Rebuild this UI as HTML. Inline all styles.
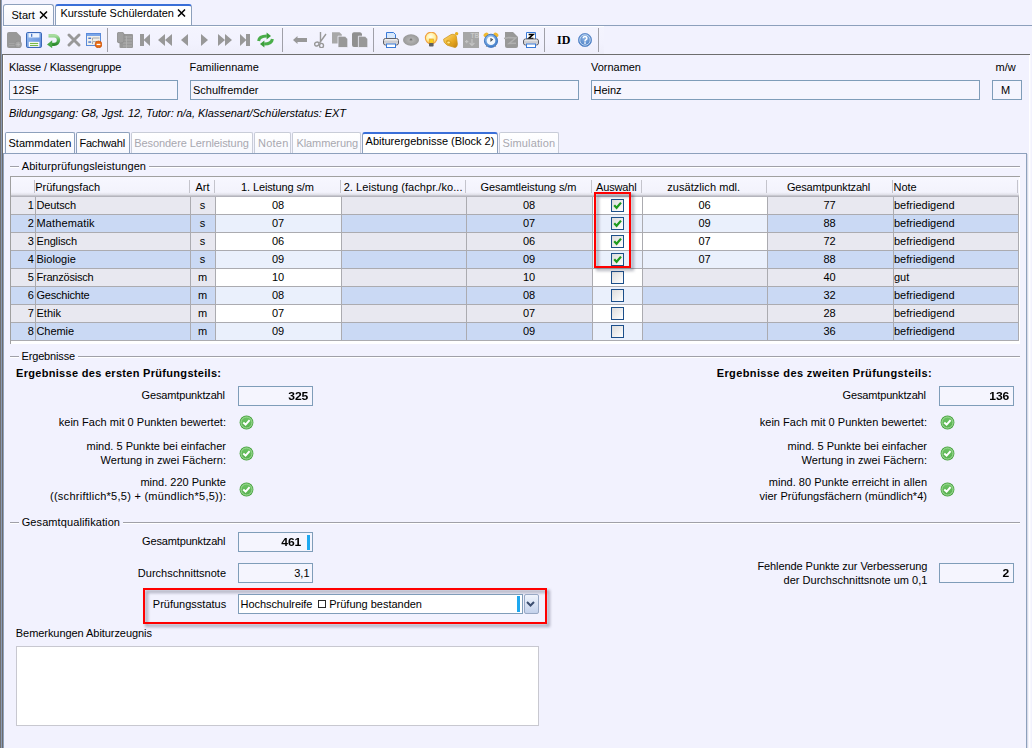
<!DOCTYPE html>
<html><head><meta charset="utf-8"><style>
html,body{margin:0;padding:0;}
body{width:1032px;height:748px;overflow:hidden;position:relative;background:#F2F2FE;font-family:"Liberation Sans",sans-serif;font-size:11px;color:#000;}
.t{position:absolute;white-space:nowrap;line-height:13px;}
.r{position:absolute;}
.cb{width:13px;height:13px;box-sizing:border-box;border:1px solid #1C4F8A;background:linear-gradient(135deg,#DCDCDC,#FFFFFF);}
</style></head><body>
<div class="r" style="left:0px;top:0px;width:1px;height:748px;background:#707070"></div>
<div class="r" style="left:1px;top:0px;width:1px;height:748px;background:#8A9AB4"></div>
<div class="r" style="left:2px;top:54px;width:1px;height:694px;background:#6C6C6C"></div>
<div class="r" style="left:3px;top:4px;width:51px;height:22px;border:1px solid #8DA0BC;border-bottom:none;border-radius:3px 3px 0 0;background:linear-gradient(#FFFFFF,#F4F5FC);box-sizing:border-box"></div>
<div class="t" style="top:9px;left:11.5px;">Start</div>
<svg class="r" style="left:39px;top:11px" width="9" height="8" viewBox="0 0 9 8"><path d="M1 0.5L8 7.5M8 0.5L1 7.5" stroke="#000" stroke-width="1.5"/></svg>
<div class="r" style="left:55px;top:4px;width:137px;height:22px;border:1px solid #8DA0BC;border-top:2px solid #3A6FD8;border-bottom:none;border-radius:3px 3px 0 0;background:#FFFFFF;box-sizing:border-box"></div>
<div class="t" style="top:7px;left:60.5px;letter-spacing:-0.041px;">Kursstufe Schülerdaten</div>
<svg class="r" style="left:177px;top:9px" width="9" height="8" viewBox="0 0 9 8"><path d="M1 0.5L8 7.5M8 0.5L1 7.5" stroke="#000" stroke-width="1.5"/></svg>
<div class="r" style="left:3px;top:25px;width:1029px;height:1px;background:#8DA0BC"></div>
<div class="r" style="left:3px;top:26px;width:601px;height:1px;background:#FFFFFF"></div>
<div class="r" style="left:3px;top:27px;width:601px;height:27px;background:linear-gradient(#F4F4FE,#F2F2FE 60%,#EEEEFA)"></div>
<div class="r" style="left:3px;top:54px;width:1027px;height:1px;background:#6E6E6E"></div>
<div class="r" style="left:107px;top:28px;width:1px;height:24px;background:#A0A0A8"></div>
<div class="r" style="left:282px;top:28px;width:1px;height:24px;background:#A0A0A8"></div>
<div class="r" style="left:373px;top:28px;width:1px;height:24px;background:#A0A0A8"></div>
<div class="r" style="left:544px;top:28px;width:1px;height:24px;background:#A0A0A8"></div>
<div class="r" style="left:598px;top:28px;width:1px;height:24px;background:#A0A0A8"></div>
<div class="r" style="left:1029px;top:55px;width:1px;height:693px;background:#FFFFFF"></div>
<div class="r" style="left:1030px;top:55px;width:1px;height:693px;background:#F8F8FE"></div>
<div class="r" style="left:3px;top:55px;width:1px;height:98px;background:#FFFFFF"></div>
<div class="t" style="top:61px;left:9px;letter-spacing:-0.156px;">Klasse / Klassengruppe</div>
<div class="t" style="top:61px;left:189.5px;letter-spacing:0.019px;">Familienname</div>
<div class="t" style="top:61px;left:591px;letter-spacing:-0.022px;">Vornamen</div>
<div class="t" style="top:61px;left:995.5px;">m/w</div>
<div class="r" style="left:9px;top:80px;width:169px;height:20px;border:1px solid #7F9DB9;background:#F5F5FE;box-sizing:border-box"></div>
<div class="r" style="left:190px;top:80px;width:389px;height:20px;border:1px solid #7F9DB9;background:#F5F5FE;box-sizing:border-box"></div>
<div class="r" style="left:591px;top:80px;width:389px;height:20px;border:1px solid #7F9DB9;background:#F5F5FE;box-sizing:border-box"></div>
<div class="r" style="left:992px;top:80px;width:30px;height:20px;border:1px solid #7F9DB9;background:#F5F5FE;box-sizing:border-box"></div>
<div class="t" style="top:84px;left:12.5px;">12SF</div>
<div class="t" style="top:84px;left:193px;">Schulfremder</div>
<div class="t" style="top:84px;left:593.5px;">Heinz</div>
<div class="t" style="top:84px;left:855.50px;width:300px;text-align:center;">M</div>
<div class="t" style="top:107px;left:9px;font-style:italic;letter-spacing:-0.04px;">Bildungsgang: G8, Jgst. 12, Tutor: n/a, Klassenart/Schülerstatus: EXT</div>
<div class="r" style="left:3px;top:153px;width:1024px;height:595px;border:1px solid #8DA0BC;border-bottom:none;box-sizing:border-box;background:#F2F2FE"></div>
<div class="r" style="left:1027px;top:154px;width:1px;height:594px;background:#D8DCE8"></div>
<div class="r" style="left:5px;top:132px;width:70px;height:21px;border:1px solid #8DA0BC;border-bottom:none;border-radius:2px 2px 0 0;background:linear-gradient(#FFFFFF,#F7F8FE);box-sizing:border-box"></div>
<div class="t" style="top:137px;left:8.4px;letter-spacing:0.069px;">Stammdaten</div>
<div class="r" style="left:76px;top:132px;width:54px;height:21px;border:1px solid #8DA0BC;border-bottom:none;border-radius:2px 2px 0 0;background:linear-gradient(#FFFFFF,#F7F8FE);box-sizing:border-box"></div>
<div class="t" style="top:137px;left:79.4px;letter-spacing:-0.183px;">Fachwahl</div>
<div class="r" style="left:131px;top:132px;width:122px;height:21px;border:1px solid #C8CCD8;border-bottom:none;border-radius:2px 2px 0 0;background:linear-gradient(#FFFFFF,#F7F8FE);box-sizing:border-box"></div>
<div class="t" style="top:137px;left:134.3px;color:#A8A8B0;letter-spacing:-0.081px;">Besondere Lernleistung</div>
<div class="r" style="left:254px;top:132px;width:37px;height:21px;border:1px solid #C8CCD8;border-bottom:none;border-radius:2px 2px 0 0;background:linear-gradient(#FFFFFF,#F7F8FE);box-sizing:border-box"></div>
<div class="t" style="top:137px;left:258px;color:#A8A8B0;letter-spacing:0.235px;">Noten</div>
<div class="r" style="left:292px;top:132px;width:69px;height:21px;border:1px solid #C8CCD8;border-bottom:none;border-radius:2px 2px 0 0;background:linear-gradient(#FFFFFF,#F7F8FE);box-sizing:border-box"></div>
<div class="t" style="top:137px;left:296.4px;color:#A8A8B0;letter-spacing:-0.073px;">Klammerung</div>
<div class="r" style="left:499px;top:132px;width:60px;height:21px;border:1px solid #C8CCD8;border-bottom:none;border-radius:2px 2px 0 0;background:linear-gradient(#FFFFFF,#F7F8FE);box-sizing:border-box"></div>
<div class="t" style="top:137px;left:502.5px;color:#A8A8B0;letter-spacing:0.127px;">Simulation</div>
<div class="r" style="left:362px;top:132px;width:136px;height:21px;border:1px solid #8DA0BC;border-top:2px solid #3A6FD8;border-bottom:none;border-radius:3px 3px 0 0;background:#FFFFFF;box-sizing:border-box"></div>
<div class="r" style="left:363px;top:153px;width:134px;height:1px;background:#8DA0BC"></div>
<div class="t" style="top:135px;left:365.6px;letter-spacing:-0.009px;">Abiturergebnisse (Block 2)</div>
<div class="r" style="left:10px;top:166px;width:9px;height:1px;background:#A0A0A8"></div>
<div class="r" style="left:10px;top:167px;width:9px;height:1px;background:#FFFFFF"></div>
<div class="r" style="left:149px;top:166px;width:871px;height:1px;background:#A0A0A8"></div>
<div class="r" style="left:149px;top:167px;width:871px;height:1px;background:#FFFFFF"></div>
<div class="t" style="top:160px;left:21.7px;letter-spacing:0.113px;">Abiturprüfungsleistungen</div>
<div class="r" style="left:10px;top:176px;width:1010px;height:168px;background:#FFFFFF;border-top:1px solid #A0A0A0;border-left:1px solid #A0A0A0;box-sizing:border-box"></div>
<div class="r" style="left:11px;top:177px;width:1008px;height:19px;background:linear-gradient(#F7F7FF 0%,#F3F3FC 80%,#E2E2EA 92%,#C8C8D0 100%)"></div>
<div class="r" style="left:34px;top:180px;width:1px;height:13px;background:#C4C4CC"></div>
<div class="r" style="left:189px;top:180px;width:1px;height:13px;background:#C4C4CC"></div>
<div class="r" style="left:214px;top:180px;width:1px;height:13px;background:#C4C4CC"></div>
<div class="r" style="left:340px;top:180px;width:1px;height:13px;background:#C4C4CC"></div>
<div class="r" style="left:465px;top:180px;width:1px;height:13px;background:#C4C4CC"></div>
<div class="r" style="left:591px;top:180px;width:1px;height:13px;background:#C4C4CC"></div>
<div class="r" style="left:641px;top:180px;width:1px;height:13px;background:#C4C4CC"></div>
<div class="r" style="left:766px;top:180px;width:1px;height:13px;background:#C4C4CC"></div>
<div class="r" style="left:892px;top:180px;width:1px;height:13px;background:#C4C4CC"></div>
<div class="r" style="left:1017px;top:180px;width:1px;height:13px;background:#C4C4CC"></div>
<div class="t" style="top:181px;left:35.2px;letter-spacing:0.016px;">Prüfungsfach</div>
<div class="t" style="top:181px;left:52.50px;width:300px;text-align:center;">Art</div>
<div class="t" style="top:181px;left:127.44px;width:300px;text-align:center;letter-spacing:-0.128px;">1. Leistung s/m</div>
<div class="t" style="top:181px;left:343.7px;letter-spacing:0.056px;">2. Leistung (fachpr./ko...</div>
<div class="t" style="top:181px;left:378.46px;width:300px;text-align:center;letter-spacing:-0.071px;">Gesamtleistung s/m</div>
<div class="t" style="top:181px;left:466.33px;width:300px;text-align:center;letter-spacing:-0.13px;">Auswahl</div>
<div class="t" style="top:181px;left:553.73px;width:300px;text-align:center;letter-spacing:0.061px;">zusätzlich mdl.</div>
<div class="t" style="top:181px;left:678.52px;width:300px;text-align:center;letter-spacing:-0.158px;">Gesamtpunktzahl</div>
<div class="t" style="top:181px;left:893.5px;">Note</div>
<div class="r" style="left:11px;top:197px;width:1007px;height:17px;background:#E8E8F0"></div>
<div class="r" style="left:216px;top:197px;width:125px;height:17px;background:#FFFFFF"></div>
<div class="r" style="left:593px;top:197px;width:49px;height:17px;background:#FFFFFF"></div>
<div class="r" style="left:643px;top:197px;width:124px;height:17px;background:#FFFFFF"></div>
<div class="t" style="top:199px;right:998.20px;text-align:right;">1</div>
<div class="t" style="top:199px;left:36.5px;letter-spacing:-0.143px;">Deutsch</div>
<div class="t" style="top:199px;left:52.50px;width:300px;text-align:center;">s</div>
<div class="t" style="top:199px;left:128.00px;width:300px;text-align:center;">08</div>
<div class="t" style="top:199px;left:379.00px;width:300px;text-align:center;">08</div>
<div class="t" style="top:199px;left:554.50px;width:300px;text-align:center;">06</div>
<div class="t" style="top:199px;left:679.50px;width:300px;text-align:center;">77</div>
<div class="t" style="top:199px;left:894px;">befriedigend</div>
<div class="r cb" style="left:611px;top:199px"></div>
<svg class="r" style="left:612px;top:200px" width="11" height="11" viewBox="0 0 11 11"><path d="M2.2 5.2L4.6 7.8L9 2.6" fill="none" stroke="#1E9A1E" stroke-width="2.2"/></svg>
<div class="r" style="left:11px;top:215px;width:1007px;height:17px;background:#CAD9F4"></div>
<div class="r" style="left:216px;top:215px;width:125px;height:17px;background:#EAF0FC"></div>
<div class="r" style="left:593px;top:215px;width:49px;height:17px;background:#EAF0FC"></div>
<div class="r" style="left:643px;top:215px;width:124px;height:17px;background:#EAF0FC"></div>
<div class="t" style="top:217px;right:998.20px;text-align:right;">2</div>
<div class="t" style="top:217px;left:36.5px;letter-spacing:0.127px;">Mathematik</div>
<div class="t" style="top:217px;left:52.50px;width:300px;text-align:center;">s</div>
<div class="t" style="top:217px;left:128.00px;width:300px;text-align:center;">07</div>
<div class="t" style="top:217px;left:379.00px;width:300px;text-align:center;">07</div>
<div class="t" style="top:217px;left:554.50px;width:300px;text-align:center;">09</div>
<div class="t" style="top:217px;left:679.50px;width:300px;text-align:center;">88</div>
<div class="t" style="top:217px;left:894px;">befriedigend</div>
<div class="r cb" style="left:611px;top:217px"></div>
<svg class="r" style="left:612px;top:218px" width="11" height="11" viewBox="0 0 11 11"><path d="M2.2 5.2L4.6 7.8L9 2.6" fill="none" stroke="#1E9A1E" stroke-width="2.2"/></svg>
<div class="r" style="left:11px;top:233px;width:1007px;height:17px;background:#E8E8F0"></div>
<div class="r" style="left:216px;top:233px;width:125px;height:17px;background:#FFFFFF"></div>
<div class="r" style="left:593px;top:233px;width:49px;height:17px;background:#FFFFFF"></div>
<div class="r" style="left:643px;top:233px;width:124px;height:17px;background:#FFFFFF"></div>
<div class="t" style="top:235px;right:998.20px;text-align:right;">3</div>
<div class="t" style="top:235px;left:36.5px;letter-spacing:-0.154px;">Englisch</div>
<div class="t" style="top:235px;left:52.50px;width:300px;text-align:center;">s</div>
<div class="t" style="top:235px;left:128.00px;width:300px;text-align:center;">06</div>
<div class="t" style="top:235px;left:379.00px;width:300px;text-align:center;">06</div>
<div class="t" style="top:235px;left:554.50px;width:300px;text-align:center;">07</div>
<div class="t" style="top:235px;left:679.50px;width:300px;text-align:center;">72</div>
<div class="t" style="top:235px;left:894px;">befriedigend</div>
<div class="r cb" style="left:611px;top:235px"></div>
<svg class="r" style="left:612px;top:236px" width="11" height="11" viewBox="0 0 11 11"><path d="M2.2 5.2L4.6 7.8L9 2.6" fill="none" stroke="#1E9A1E" stroke-width="2.2"/></svg>
<div class="r" style="left:11px;top:251px;width:1007px;height:17px;background:#CAD9F4"></div>
<div class="r" style="left:216px;top:251px;width:125px;height:17px;background:#EAF0FC"></div>
<div class="r" style="left:593px;top:251px;width:49px;height:17px;background:#EAF0FC"></div>
<div class="r" style="left:643px;top:251px;width:124px;height:17px;background:#EAF0FC"></div>
<div class="t" style="top:253px;right:998.20px;text-align:right;">4</div>
<div class="t" style="top:253px;left:36.5px;letter-spacing:0.023px;">Biologie</div>
<div class="t" style="top:253px;left:52.50px;width:300px;text-align:center;">s</div>
<div class="t" style="top:253px;left:128.00px;width:300px;text-align:center;">09</div>
<div class="t" style="top:253px;left:379.00px;width:300px;text-align:center;">09</div>
<div class="t" style="top:253px;left:554.50px;width:300px;text-align:center;">07</div>
<div class="t" style="top:253px;left:679.50px;width:300px;text-align:center;">88</div>
<div class="t" style="top:253px;left:894px;">befriedigend</div>
<div class="r cb" style="left:611px;top:253px"></div>
<svg class="r" style="left:612px;top:254px" width="11" height="11" viewBox="0 0 11 11"><path d="M2.2 5.2L4.6 7.8L9 2.6" fill="none" stroke="#1E9A1E" stroke-width="2.2"/></svg>
<div class="r" style="left:11px;top:269px;width:1007px;height:17px;background:#E8E8F0"></div>
<div class="r" style="left:216px;top:269px;width:125px;height:17px;background:#FFFFFF"></div>
<div class="r" style="left:593px;top:269px;width:49px;height:17px;background:#FFFFFF"></div>
<div class="t" style="top:271px;right:998.20px;text-align:right;">5</div>
<div class="t" style="top:271px;left:36.5px;letter-spacing:-0.21px;">Französisch</div>
<div class="t" style="top:271px;left:52.50px;width:300px;text-align:center;">m</div>
<div class="t" style="top:271px;left:128.00px;width:300px;text-align:center;">10</div>
<div class="t" style="top:271px;left:379.00px;width:300px;text-align:center;">10</div>
<div class="t" style="top:271px;left:679.50px;width:300px;text-align:center;">40</div>
<div class="t" style="top:271px;left:894px;">gut</div>
<div class="r cb" style="left:611px;top:271px"></div>
<div class="r" style="left:11px;top:287px;width:1007px;height:17px;background:#CAD9F4"></div>
<div class="r" style="left:216px;top:287px;width:125px;height:17px;background:#EAF0FC"></div>
<div class="r" style="left:593px;top:287px;width:49px;height:17px;background:#EAF0FC"></div>
<div class="t" style="top:289px;right:998.20px;text-align:right;">6</div>
<div class="t" style="top:289px;left:36.5px;letter-spacing:-0.203px;">Geschichte</div>
<div class="t" style="top:289px;left:52.50px;width:300px;text-align:center;">m</div>
<div class="t" style="top:289px;left:128.00px;width:300px;text-align:center;">08</div>
<div class="t" style="top:289px;left:379.00px;width:300px;text-align:center;">08</div>
<div class="t" style="top:289px;left:679.50px;width:300px;text-align:center;">32</div>
<div class="t" style="top:289px;left:894px;">befriedigend</div>
<div class="r cb" style="left:611px;top:289px"></div>
<div class="r" style="left:11px;top:305px;width:1007px;height:17px;background:#E8E8F0"></div>
<div class="r" style="left:216px;top:305px;width:125px;height:17px;background:#FFFFFF"></div>
<div class="r" style="left:593px;top:305px;width:49px;height:17px;background:#FFFFFF"></div>
<div class="t" style="top:307px;right:998.20px;text-align:right;">7</div>
<div class="t" style="top:307px;left:36.5px;">Ethik</div>
<div class="t" style="top:307px;left:52.50px;width:300px;text-align:center;">m</div>
<div class="t" style="top:307px;left:128.00px;width:300px;text-align:center;">07</div>
<div class="t" style="top:307px;left:379.00px;width:300px;text-align:center;">07</div>
<div class="t" style="top:307px;left:679.50px;width:300px;text-align:center;">28</div>
<div class="t" style="top:307px;left:894px;">befriedigend</div>
<div class="r cb" style="left:611px;top:307px"></div>
<div class="r" style="left:11px;top:323px;width:1007px;height:17px;background:#CAD9F4"></div>
<div class="r" style="left:216px;top:323px;width:125px;height:17px;background:#EAF0FC"></div>
<div class="r" style="left:593px;top:323px;width:49px;height:17px;background:#EAF0FC"></div>
<div class="t" style="top:325px;right:998.20px;text-align:right;">8</div>
<div class="t" style="top:325px;left:36.5px;letter-spacing:-0.081px;">Chemie</div>
<div class="t" style="top:325px;left:52.50px;width:300px;text-align:center;">m</div>
<div class="t" style="top:325px;left:128.00px;width:300px;text-align:center;">09</div>
<div class="t" style="top:325px;left:379.00px;width:300px;text-align:center;">09</div>
<div class="t" style="top:325px;left:679.50px;width:300px;text-align:center;">36</div>
<div class="t" style="top:325px;left:894px;">befriedigend</div>
<div class="r cb" style="left:611px;top:325px"></div>
<div class="r" style="left:11px;top:214px;width:1008px;height:1px;background:#ABABB0"></div>
<div class="r" style="left:11px;top:232px;width:1008px;height:1px;background:#ABABB0"></div>
<div class="r" style="left:11px;top:250px;width:1008px;height:1px;background:#ABABB0"></div>
<div class="r" style="left:11px;top:268px;width:1008px;height:1px;background:#ABABB0"></div>
<div class="r" style="left:11px;top:286px;width:1008px;height:1px;background:#ABABB0"></div>
<div class="r" style="left:11px;top:304px;width:1008px;height:1px;background:#ABABB0"></div>
<div class="r" style="left:11px;top:322px;width:1008px;height:1px;background:#ABABB0"></div>
<div class="r" style="left:11px;top:340px;width:1008px;height:1px;background:#ABABB0"></div>
<div class="r" style="left:35px;top:196px;width:1px;height:145px;background:#ABABB0"></div>
<div class="r" style="left:190px;top:196px;width:1px;height:145px;background:#ABABB0"></div>
<div class="r" style="left:215px;top:196px;width:1px;height:145px;background:#ABABB0"></div>
<div class="r" style="left:341px;top:196px;width:1px;height:145px;background:#ABABB0"></div>
<div class="r" style="left:466px;top:196px;width:1px;height:145px;background:#ABABB0"></div>
<div class="r" style="left:592px;top:196px;width:1px;height:145px;background:#ABABB0"></div>
<div class="r" style="left:642px;top:196px;width:1px;height:145px;background:#ABABB0"></div>
<div class="r" style="left:767px;top:196px;width:1px;height:145px;background:#ABABB0"></div>
<div class="r" style="left:893px;top:196px;width:1px;height:145px;background:#ABABB0"></div>
<div class="r" style="left:1018px;top:196px;width:1px;height:145px;background:#ABABB0"></div>
<div class="r" style="left:11px;top:195px;width:1008px;height:1px;background:#C8C8D0"></div>
<div class="r" style="left:11px;top:196px;width:1008px;height:1px;background:#B4B4BC"></div>
<div class="r" style="left:596px;top:194px;width:38px;height:77px;border:3px solid rgba(50,55,80,0.36);box-sizing:border-box;filter:blur(1.5px)"></div>
<div class="r" style="left:594px;top:192px;width:37px;height:76px;border:2px solid #FF0000;box-sizing:border-box"></div>
<div class="r" style="left:10px;top:356px;width:9px;height:1px;background:#A0A0A8"></div>
<div class="r" style="left:10px;top:357px;width:9px;height:1px;background:#FFFFFF"></div>
<div class="r" style="left:78px;top:356px;width:942px;height:1px;background:#A0A0A8"></div>
<div class="r" style="left:78px;top:357px;width:942px;height:1px;background:#FFFFFF"></div>
<div class="t" style="top:350px;left:21.5px;letter-spacing:-0.161px;">Ergebnisse</div>
<div class="t" style="top:367px;left:16px;font-weight:bold;letter-spacing:0.303px;">Ergebnisse des ersten Prüfungsteils:</div>
<div class="t" style="top:367px;left:716.7px;font-weight:bold;letter-spacing:0.386px;">Ergebnisse des zweiten Prüfungsteils:</div>
<svg width="0" height="0" style="position:absolute"><defs><linearGradient id="gChk" x1="0" y1="0" x2="0" y2="1"><stop offset="0" stop-color="#6CC464"/><stop offset="1" stop-color="#58B050"/></linearGradient></defs></svg>
<div class="t" style="top:389px;right:807.16px;text-align:right;letter-spacing:-0.158px;">Gesamtpunktzahl</div>
<div class="r" style="left:238px;top:386px;width:75px;height:20px;border:1px solid #7F9DB9;background:#F5F5FE;box-sizing:border-box"></div>
<div class="t" style="top:390px;right:724.00px;text-align:right;font-weight:bold;transform:scaleX(1.1);transform-origin:right center;">325</div>
<div class="t" style="top:416px;right:805.97px;text-align:right;letter-spacing:0.031px;">kein Fach mit 0 Punkten bewertet:</div>
<svg class="r" style="left:238.5px;top:414.5px" width="15" height="15" viewBox="0 0 15 15"><circle cx="7.5" cy="7.5" r="6.9" fill="#44A23C"/><circle cx="7.5" cy="7.5" r="5.6" fill="url(#gChk)" stroke="#B4E4AC" stroke-width="0.9"/><path d="M4.3 7.6L6.6 9.7L10.6 5.2" fill="none" stroke="#FFFFFF" stroke-width="2"/></svg>
<div class="t" style="top:440px;right:806.00px;text-align:right;letter-spacing:0.003px;">mind. 5 Punkte bei einfacher</div>
<div class="t" style="top:454px;right:805.96px;text-align:right;letter-spacing:0.038px;">Wertung in zwei Fächern:</div>
<svg class="r" style="left:238.5px;top:445.5px" width="15" height="15" viewBox="0 0 15 15"><circle cx="7.5" cy="7.5" r="6.9" fill="#44A23C"/><circle cx="7.5" cy="7.5" r="5.6" fill="url(#gChk)" stroke="#B4E4AC" stroke-width="0.9"/><path d="M4.3 7.6L6.6 9.7L10.6 5.2" fill="none" stroke="#FFFFFF" stroke-width="2"/></svg>
<div class="t" style="top:476px;right:806.00px;text-align:right;">mind. 220 Punkte</div>
<div class="t" style="top:490px;right:805.74px;text-align:right;letter-spacing:0.261px;">((schriftlich*5,5) + (mündlich*5,5)):</div>
<svg class="r" style="left:238.5px;top:481.5px" width="15" height="15" viewBox="0 0 15 15"><circle cx="7.5" cy="7.5" r="6.9" fill="#44A23C"/><circle cx="7.5" cy="7.5" r="5.6" fill="url(#gChk)" stroke="#B4E4AC" stroke-width="0.9"/><path d="M4.3 7.6L6.6 9.7L10.6 5.2" fill="none" stroke="#FFFFFF" stroke-width="2"/></svg>
<div class="t" style="top:389px;right:106.16px;text-align:right;letter-spacing:-0.158px;">Gesamtpunktzahl</div>
<div class="r" style="left:939px;top:386px;width:75px;height:20px;border:1px solid #7F9DB9;background:#F5F5FE;box-sizing:border-box"></div>
<div class="t" style="top:390px;right:23.00px;text-align:right;font-weight:bold;transform:scaleX(1.1);transform-origin:right center;">136</div>
<div class="t" style="top:416px;right:104.97px;text-align:right;letter-spacing:0.031px;">kein Fach mit 0 Punkten bewertet:</div>
<svg class="r" style="left:939.5px;top:414.5px" width="15" height="15" viewBox="0 0 15 15"><circle cx="7.5" cy="7.5" r="6.9" fill="#44A23C"/><circle cx="7.5" cy="7.5" r="5.6" fill="url(#gChk)" stroke="#B4E4AC" stroke-width="0.9"/><path d="M4.3 7.6L6.6 9.7L10.6 5.2" fill="none" stroke="#FFFFFF" stroke-width="2"/></svg>
<div class="t" style="top:440px;right:105.00px;text-align:right;letter-spacing:0.003px;">mind. 5 Punkte bei einfacher</div>
<div class="t" style="top:454px;right:104.96px;text-align:right;letter-spacing:0.038px;">Wertung in zwei Fächern:</div>
<svg class="r" style="left:939.5px;top:445.5px" width="15" height="15" viewBox="0 0 15 15"><circle cx="7.5" cy="7.5" r="6.9" fill="#44A23C"/><circle cx="7.5" cy="7.5" r="5.6" fill="url(#gChk)" stroke="#B4E4AC" stroke-width="0.9"/><path d="M4.3 7.6L6.6 9.7L10.6 5.2" fill="none" stroke="#FFFFFF" stroke-width="2"/></svg>
<div class="t" style="top:476px;right:104.96px;text-align:right;letter-spacing:0.036px;">mind. 80 Punkte erreicht in allen</div>
<div class="t" style="top:490px;right:104.96px;text-align:right;letter-spacing:0.04px;">vier Prüfungsfächern (mündlich*4)</div>
<svg class="r" style="left:939.5px;top:481.5px" width="15" height="15" viewBox="0 0 15 15"><circle cx="7.5" cy="7.5" r="6.9" fill="#44A23C"/><circle cx="7.5" cy="7.5" r="5.6" fill="url(#gChk)" stroke="#B4E4AC" stroke-width="0.9"/><path d="M4.3 7.6L6.6 9.7L10.6 5.2" fill="none" stroke="#FFFFFF" stroke-width="2"/></svg>
<div class="r" style="left:10px;top:522px;width:9px;height:1px;background:#A0A0A8"></div>
<div class="r" style="left:10px;top:523px;width:9px;height:1px;background:#FFFFFF"></div>
<div class="r" style="left:123px;top:522px;width:897px;height:1px;background:#A0A0A8"></div>
<div class="r" style="left:123px;top:523px;width:897px;height:1px;background:#FFFFFF"></div>
<div class="t" style="top:516px;left:21.7px;letter-spacing:0.094px;">Gesamtqualifikation</div>
<div class="t" style="top:535px;right:806.66px;text-align:right;letter-spacing:-0.158px;">Gesamtpunktzahl</div>
<div class="r" style="left:238px;top:532px;width:75px;height:20px;border:1px solid #7F9DB9;background:#F5F5FE;box-sizing:border-box"></div>
<div class="t" style="top:536px;right:730.50px;text-align:right;font-weight:bold;transform:scaleX(1.1);transform-origin:right center;">461</div>
<div class="r" style="left:307px;top:535px;width:3px;height:15px;background:#1EA8F0"></div>
<div class="t" style="top:567px;right:805.99px;text-align:right;letter-spacing:0.01px;">Durchschnittsnote</div>
<div class="r" style="left:238px;top:563px;width:75px;height:20px;border:1px solid #7F9DB9;background:#F5F5FE;box-sizing:border-box"></div>
<div class="t" style="top:567px;right:722.50px;text-align:right;">3,1</div>
<div class="t" style="top:560px;right:104.68px;text-align:right;letter-spacing:-0.079px;">Fehlende Punkte zur Verbesserung</div>
<div class="t" style="top:574px;right:104.60px;text-align:right;letter-spacing:0.004px;">der Durchschnittsnote um 0,1</div>
<div class="r" style="left:939px;top:563px;width:75px;height:20px;border:1px solid #7F9DB9;background:#F5F5FE;box-sizing:border-box"></div>
<div class="t" style="top:567px;right:22.50px;text-align:right;font-weight:bold;transform:scaleX(1.1);transform-origin:right center;">2</div>
<div class="r" style="left:145px;top:590px;width:405px;height:37px;border:3px solid rgba(50,55,80,0.36);box-sizing:border-box;filter:blur(1.5px)"></div>
<div class="r" style="left:143px;top:588px;width:404px;height:36px;border:2px solid #FF0000;box-sizing:border-box"></div>
<div class="t" style="top:598px;left:152.8px;letter-spacing:0.002px;">Prüfungsstatus</div>
<div class="r" style="left:238px;top:594px;width:285px;height:20px;border:1px solid #7F9DB9;background:#FFFFFF;box-sizing:border-box"></div>
<div class="t" style="top:598px;left:240.6px;letter-spacing:-0.074px;">Hochschulreife</div>
<div class="r" style="left:318px;top:600px;width:8px;height:8px;border:1px solid #282828;box-sizing:border-box"></div>
<div class="t" style="top:598px;left:329.3px;letter-spacing:-0.017px;">Prüfung bestanden</div>
<div class="r" style="left:517px;top:596px;width:3px;height:16px;background:#1EA8F0"></div>
<div class="r" style="left:524px;top:594px;width:15px;height:20px;border:1px solid #98A8C4;border-radius:2px;background:linear-gradient(#F0F4FC,#C4D2EC);box-sizing:border-box"></div>
<svg class="r" style="left:525.5px;top:600px" width="9" height="8" viewBox="0 0 9 8"><path d="M1 2L4.5 5.5L8 2" fill="none" stroke="#3C4E70" stroke-width="2"/></svg>
<div class="t" style="top:627px;left:15.8px;letter-spacing:-0.058px;">Bemerkungen Abiturzeugnis</div>
<div class="r" style="left:16px;top:646px;width:523px;height:80px;border:1px solid #C8C8D0;background:#FFFFFF;box-sizing:border-box"></div>
<svg width="0" height="0" style="position:absolute"><defs>
<linearGradient id="gGreen" x1="0" y1="0" x2="0" y2="1"><stop offset="0" stop-color="#A8DCA0"/><stop offset="0.5" stop-color="#5CB85A"/><stop offset="1" stop-color="#2E8A2E"/></linearGradient>
<linearGradient id="gBlue" x1="0" y1="0" x2="1" y2="1"><stop offset="0" stop-color="#9CC0F0"/><stop offset="1" stop-color="#5A88D8"/></linearGradient>
<linearGradient id="gPrn" x1="0" y1="0" x2="0" y2="1"><stop offset="0" stop-color="#FFFFFF"/><stop offset="0.5" stop-color="#C8C8CC"/><stop offset="1" stop-color="#E8E8EC"/></linearGradient>
<radialGradient id="gDisc" cx="0.5" cy="0.5" r="0.5"><stop offset="0" stop-color="#909090"/><stop offset="0.3" stop-color="#B0B0B0"/><stop offset="1" stop-color="#989898"/></radialGradient>
<radialGradient id="gBulb" cx="0.45" cy="0.4" r="0.6"><stop offset="0" stop-color="#FFFFF0"/><stop offset="0.6" stop-color="#FFF0A0"/><stop offset="1" stop-color="#F8C850"/></radialGradient>
<linearGradient id="gBell" x1="0" y1="0" x2="1" y2="1"><stop offset="0" stop-color="#FFE080"/><stop offset="0.6" stop-color="#E8A820"/><stop offset="1" stop-color="#C08010"/></linearGradient>
<radialGradient id="gHelp" cx="0.5" cy="0.35" r="0.6"><stop offset="0" stop-color="#8EB4E4"/><stop offset="1" stop-color="#4A7EC4"/></radialGradient>
<radialGradient id="gClock" cx="0.4" cy="0.35" r="0.7"><stop offset="0" stop-color="#A8D0F8"/><stop offset="1" stop-color="#3A78C8"/></radialGradient>
</defs></svg>
<svg class="r" style="left:7px;top:32px" width="15" height="16" viewBox="0 0 15 16"><path d="M2 0H9.5L14 4.5V14A2 2 0 0 1 12 16H2A2 2 0 0 1 0 14V2A2 2 0 0 1 2 0Z" fill="#989898"/><path d="M2 11.5H8M2 13.5H8" stroke="#A8A8A8" stroke-width="0.8"/><circle cx="11.2" cy="12.4" r="3.4" fill="#A4A4A4" stroke="#8C8C8C" stroke-width="0.6"/><path d="M11.2 10.6V14.2M9.4 12.4H13" stroke="#B8B8B8" stroke-width="0.9"/></svg>
<svg class="r" style="left:26px;top:32px" width="16" height="16" viewBox="0 0 16 16"><rect x="0.5" y="0.5" width="15" height="15" rx="1.2" fill="url(#gBlue)" stroke="#3A68B8"/><rect x="2.6" y="1.2" width="10.8" height="4.3" fill="#EEF4FE"/><rect x="5" y="1.8" width="1.3" height="3" fill="#4A78C8"/><rect x="2.8" y="9.8" width="10.6" height="5" fill="#FFFFFF"/><rect x="4" y="10.9" width="8.2" height="1.1" fill="#78B848"/><rect x="4" y="12.9" width="8.2" height="1.1" fill="#78B848"/></svg>
<svg class="r" style="left:47px;top:32px" width="15" height="16" viewBox="0 0 15 16"><path d="M1.5 3.8H7.2A4.3 4.3 0 0 1 7.2 12.4H4.6" fill="none" stroke="url(#gGreen)" stroke-width="3.4"/><path d="M0 12.4L5.2 8.3V16.2Z" fill="#48A848"/></svg>
<svg class="r" style="left:67px;top:33px" width="14" height="14" viewBox="0 0 14 14"><path d="M2 2L12 12M12 2L2 12" stroke="#989898" stroke-width="2.9" stroke-linecap="round"/></svg>
<svg class="r" style="left:86px;top:33px" width="16" height="15" viewBox="0 0 16 15"><rect x="0.5" y="0.5" width="14" height="12" fill="#F0F0EC" stroke="#5A8ADA"/><rect x="1" y="1" width="13" height="2" fill="#7AA6E8"/><rect x="2.3" y="4.6" width="2.8" height="1.3" fill="#3A6AC8"/><rect x="2.3" y="8.4" width="2.8" height="1.3" fill="#3A6AC8"/><path d="M6.5 7.5V5H13.5M6.5 11V8.6H11" fill="none" stroke="#A8A8A8" stroke-width="1"/><circle cx="12.5" cy="11.4" r="3.4" fill="#E86A10" stroke="#C04A08" stroke-width="0.6"/><rect x="10.6" y="10.8" width="3.8" height="1.3" fill="#FFFFFF"/></svg>
<svg class="r" style="left:117px;top:32px" width="16" height="16" viewBox="0 0 16 16"><rect x="2.5" y="2" width="13.5" height="14" rx="1" fill="#989898"/><path d="M6 5H15M6 8H15M6 11H15M6 14H15M9.5 4V16" stroke="#B4B4B4" stroke-width="0.8"/><path d="M0 2A3.5 2 0 0 1 7 2V9A3.5 2 0 0 1 0 9Z" fill="#A0A0A0" stroke="#8A8A8A" stroke-width="0.7"/></svg>
<svg class="r" style="left:140px;top:34px" width="10" height="12" viewBox="0 0 10 12"><rect x="0" y="0" width="4" height="12" fill="#989898"/><path d="M10 0V12L3.6 6Z" fill="#989898"/></svg>
<svg class="r" style="left:158px;top:34px" width="14" height="12" viewBox="0 0 14 12"><path d="M7 0V12L0 6Z M14 0V12L7 6Z" fill="#989898"/></svg>
<svg class="r" style="left:181px;top:34px" width="7" height="12" viewBox="0 0 7 12"><path d="M7 0V12L0 6Z" fill="#989898"/></svg>
<svg class="r" style="left:201px;top:34px" width="7" height="12" viewBox="0 0 7 12"><path d="M0 0V12L7 6Z" fill="#989898"/></svg>
<svg class="r" style="left:218px;top:34px" width="14" height="12" viewBox="0 0 14 12"><path d="M0 0V12L7 6Z M7 0V12L14 6Z" fill="#989898"/></svg>
<svg class="r" style="left:240px;top:34px" width="10" height="12" viewBox="0 0 10 12"><path d="M0 0V12L6.4 6Z" fill="#989898"/><rect x="6" y="0" width="4" height="12" fill="#989898"/></svg>
<svg class="r" style="left:257px;top:32px" width="17" height="16" viewBox="0 0 17 16"><path d="M1.6 9C2 5.6 5 4 9.8 4" fill="none" stroke="#4AAE4A" stroke-width="3"/><path d="M9.6 0.4L14 4L9.6 7.6Z" fill="#3A9E3A"/><path d="M15.4 7C15 10.4 12 12 7.2 12" fill="none" stroke="#4AAE4A" stroke-width="3"/><path d="M7.4 8.4L3 12L7.4 15.6Z" fill="#3A9E3A"/></svg>
<svg class="r" style="left:293px;top:36px" width="14" height="8" viewBox="0 0 14 8"><path d="M0 4L4.5 0V2H14V6H4.5V8Z" fill="#989898"/></svg>
<svg class="r" style="left:314px;top:32px" width="13" height="16" viewBox="0 0 13 16"><path d="M6.5 0V10.5M12 2L5.5 11" stroke="#989898" stroke-width="1.4" fill="none"/><ellipse cx="2.8" cy="12" rx="2.2" ry="1.9" fill="none" stroke="#989898" stroke-width="1.4" transform="rotate(-30 2.8 12)"/><ellipse cx="7.5" cy="13.6" rx="2" ry="2.2" fill="none" stroke="#989898" stroke-width="1.4"/></svg>
<svg class="r" style="left:332px;top:32px" width="16" height="16" viewBox="0 0 16 16"><path d="M0 0.3H7.5L9.8 2.6V11.6H0Z" fill="#A8A8A8"/><path d="M6 4.2H13L15.8 7V15.5H6Z" fill="#989898" stroke="#F2F2FE" stroke-width="0.8"/></svg>
<svg class="r" style="left:352px;top:32px" width="16" height="16" viewBox="0 0 16 16"><path d="M2 0.3H8A3 3 0 0 1 10 2V15H2A2 2 0 0 1 0 13V2A2 2 0 0 1 2 0.3Z" fill="#909090"/><path d="M6.4 4.2H13L15.8 7V15.5H6.4Z" fill="#989898" stroke="#F2F2FE" stroke-width="0.8"/></svg>
<svg class="r" style="left:383px;top:32px" width="16" height="16" viewBox="0 0 16 16"><path d="M3.5 0.5H10.5L12.5 2.5V8H3.5Z" fill="#D8E8FC" stroke="#3A7AD8"/><rect x="0.5" y="6.5" width="15" height="6.5" rx="2" fill="url(#gPrn)" stroke="#606068"/><rect x="3.5" y="12" width="9" height="3.5" fill="#FFFFFF" stroke="#3A7AD8"/></svg>
<svg class="r" style="left:403px;top:34px" width="16" height="12" viewBox="0 0 16 12"><ellipse cx="8" cy="6" rx="8" ry="5.8" fill="url(#gDisc)"/><circle cx="8" cy="5.3" r="0.9" fill="#707070"/></svg>
<svg class="r" style="left:424px;top:32px" width="15" height="15" viewBox="0 0 15 15"><circle cx="7.2" cy="6" r="5.8" fill="url(#gBulb)" stroke="#F0A040" stroke-width="1.1"/><rect x="5.2" y="7" width="4.2" height="4.2" fill="#F8D020" stroke="#E8A030" stroke-width="0.7"/><rect x="5" y="11" width="4.6" height="3.6" rx="0.8" fill="#606060"/></svg>
<svg class="r" style="left:443px;top:32px" width="16" height="16" viewBox="0 0 16 16"><path d="M0.6 7.2L8 2.6Q12 1.4 13.4 4.6L14.4 12Q14.2 15.4 12 15.6L4.2 13.2Q0 10.4 0.6 7.2Z" fill="url(#gBell)" stroke="#C89018" stroke-width="0.7"/><ellipse cx="6" cy="10.6" rx="3.2" ry="2" fill="#D8A020" transform="rotate(35 6 10.6)"/><ellipse cx="5.6" cy="10.6" rx="1.4" ry="1" fill="#FFE890"/><circle cx="13.6" cy="1.8" r="1.7" fill="#E8B020"/></svg>
<svg class="r" style="left:463px;top:32px" width="16" height="16" viewBox="0 0 16 16"><rect x="0" y="0" width="16" height="16" fill="#A6A6A6"/><text x="7.5" y="6.2" font-size="6.5" fill="#C8C8C8" font-family="Liberation Sans" font-weight="bold">TB</text><path d="M9 7V13.5M6.6 11L9 13.5L11.4 11M2 9.6H5.4M3.7 7.9V11.3" stroke="#C4C4C4" stroke-width="1.2" fill="none"/></svg>
<svg class="r" style="left:483px;top:32px" width="16" height="16" viewBox="0 0 16 16"><ellipse cx="3" cy="2.8" rx="2.6" ry="2" fill="#F0B830" transform="rotate(-35 3 2.8)"/><ellipse cx="13" cy="2.8" rx="2.6" ry="2" fill="#F0B830" transform="rotate(35 13 2.8)"/><circle cx="8" cy="8.8" r="6.6" fill="url(#gClock)" stroke="#2E68B8" stroke-width="0.8"/><circle cx="8" cy="8.8" r="4.3" fill="#F4F8FC"/><path d="M8 6V8.8L9.8 7.2" stroke="#404850" stroke-width="1.1" fill="none"/><path d="M3 15L4.2 13.6M13 15L11.8 13.6" stroke="#A0A0A0" stroke-width="1"/></svg>
<svg class="r" style="left:503px;top:32px" width="16" height="16" viewBox="0 0 16 16"><path d="M2 0H10L15 5V14A2 2 0 0 1 13 16H4A2 2 0 0 1 2 14Z" fill="#989898"/><path d="M1 6.5L6 5.5L13 5.8L6 11.5L13 11.2" stroke="#B0B0B0" stroke-width="1.4" fill="none"/></svg>
<svg class="r" style="left:523px;top:32px" width="16" height="16" viewBox="0 0 16 16"><path d="M3.5 0.5H12.5V8H3.5Z" fill="#FFFFFF" stroke="#3A7AD8"/><path d="M5.6 2.4H10.2L5.6 6.4H10.4" stroke="#000" stroke-width="1.5" fill="none"/><rect x="0.5" y="7" width="15" height="6" rx="2" fill="url(#gPrn)" stroke="#606068"/><rect x="3.5" y="12" width="9" height="3.5" fill="#FFFFFF" stroke="#3A7AD8"/></svg>
<div class="t" style="left:557px;top:34px;font-family:'Liberation Serif',serif;font-weight:bold;font-size:12px;line-height:13px">ID</div>
<svg class="r" style="left:578px;top:33px" width="14" height="14" viewBox="0 0 14 14"><circle cx="7" cy="7" r="6.6" fill="url(#gHelp)" stroke="#5A88C8" stroke-width="0.8"/><circle cx="7" cy="7" r="5.2" fill="none" stroke="#C8DCF4" stroke-width="0.9"/><path d="M5.1 5.2A1.9 1.8 0 1 1 7.6 7C7 7.3 7 7.8 7 8.4" fill="none" stroke="#FFFFFF" stroke-width="1.5"/><rect x="6.2" y="9.3" width="1.6" height="1.5" fill="#FFFFFF"/></svg>
</body></html>
